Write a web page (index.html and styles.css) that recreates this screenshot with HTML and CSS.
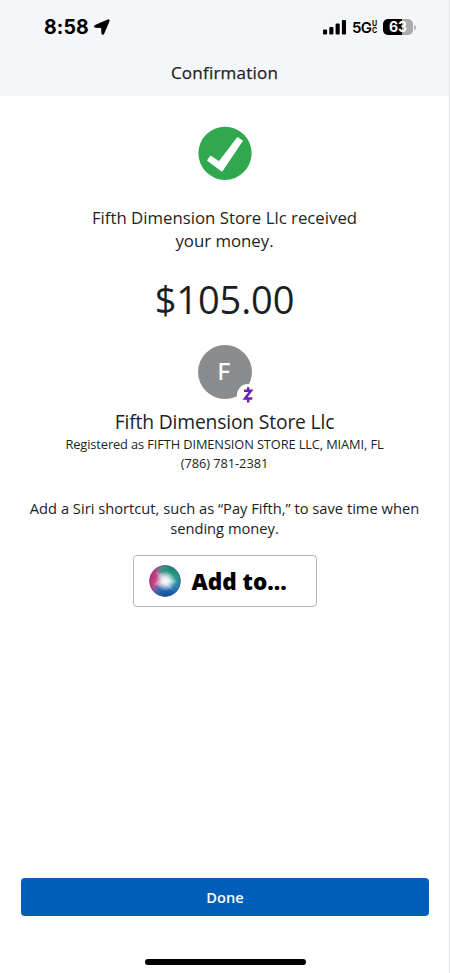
FILE: index.html
```html
<!DOCTYPE html>
<html lang="en">
<head>
<meta charset="utf-8">
<title>Confirmation</title>
<link rel="stylesheet" href="styles.css">
</head>
<body>
<div class="screen">
  <header class="header">
    <div class="status">
      <div class="status-left">
        <span class="time">8:58</span>
        <svg class="location" viewBox="0 0 16 16"><path d="M1.300 6.600 14 1.200c.7-.3 1.100.1.800.8L9.500 14.500c-.3.700-1.300.5-1.300-.2L7.800 8.300 1.500 7.900C.7 7.900.6 6.900 1.300 6.600z" stroke="#000" stroke-width="1.500" stroke-linejoin="round"/></svg>
      </div>
      <div class="status-right">
        <svg class="signal" viewBox="0 0 24 15"><rect x="0" y="9.500" width="4.100" height="5" rx="1"/><rect x="6.300" y="7" width="4.100" height="7.500" rx="1"/><rect x="12.600" y="3.500" width="4.100" height="11" rx="1"/><rect x="18.900" y="0" width="4.100" height="14.500" rx="1"/></svg>
        <span class="network">5G</span>
        <span class="uc"><span>U</span><span>C</span></span>
        <span class="battery">63</span>
        <span class="battery-tip"></span>
      </div>
    </div>
    <h1 class="title">Confirmation</h1>
  </header>
  <main class="content">
    <svg class="check" viewBox="0 0 54 54"><circle cx="27" cy="27.300" r="26.600" fill="#2fa84f"/><path d="M9.500 34.500 12.500 30 21 35.700 39.500 11.500 44.500 14.800 24 45.300z" fill="#fff" stroke="#fff" stroke-width="1" stroke-linejoin="round"/></svg>
    <p class="message">Fifth Dimension Store Llc received<br>your money.</p>
    <p class="amount">$105.00</p>
    <div class="avatar">
      <span>F</span>
      <svg class="zelle" viewBox="0 0 22 22"><circle cx="11" cy="11" r="11" fill="#fff"/><path d="M7 6.800h7L8 14.600h7.300M11.200 3.300v3M11.200 15v3.500" fill="none" stroke="#6720b8" stroke-width="2.500"/></svg>
    </div>
    <h2 class="name">Fifth Dimension Store Llc</h2>
    <p class="registered">Registered as FIFTH DIMENSION STORE LLC, MIAMI, FL</p>
    <p class="phone">(786) 781-2381</p>
    <p class="hint">Add a Siri shortcut, such as “Pay Fifth,” to save time when<br>sending money.</p>
    <button class="siri">
      <svg class="orb" viewBox="0 0 32 32">
        <defs>
          <linearGradient id="base" x1="0" y1=".4" x2="1" y2=".6"><stop stop-color="#c5286f"/><stop offset=".35" stop-color="#c05a9c"/><stop offset=".65" stop-color="#459eb0"/><stop offset="1" stop-color="#237c9a"/></linearGradient>
          <radialGradient id="green" cx=".72" cy=".08" r=".55"><stop stop-color="#188570"/><stop offset=".6" stop-color="#269b82" stop-opacity=".8"/><stop offset="1" stop-color="#35aa9b" stop-opacity="0"/></radialGradient>
          <radialGradient id="blue" cx=".55" cy="1" r=".55"><stop stop-color="#124b98"/><stop offset=".6" stop-color="#1967b2" stop-opacity=".85"/><stop offset="1" stop-color="#3887c4" stop-opacity="0"/></radialGradient>
          <radialGradient id="glow" cx=".52" cy=".5" r=".33"><stop stop-color="#fff"/><stop offset=".35" stop-color="#fff" stop-opacity=".8"/><stop offset="1" stop-color="#fff" stop-opacity="0"/></radialGradient>
        </defs>
        <circle cx="16" cy="16" r="15.700" fill="url(#base)"/><circle cx="16" cy="16" r="15.700" fill="url(#green)"/><circle cx="16" cy="16" r="15.700" fill="url(#blue)"/>
        <path d="M7 7c6 0 9 3 11 8 4-2 8-1 10 2-4 2-7 2-10 0 2 3 5 6 7 9-5-2-8-5-9-9-3 4-8 5-12 2 3-3 7-4 11-3-4-1-7-4-8-9z" fill="#fff" opacity=".2"/>
        <circle cx="16" cy="16" r="15.700" fill="url(#glow)"/><circle cx="16" cy="16" r="15.200" fill="none" stroke="#4b527a" stroke-opacity=".45"/>
      </svg>
      <span>Add to...</span>
    </button>
  </main>
  <footer class="footer">
    <button class="done">Done</button>
    <div class="home"></div>
  </footer>
</div>
</body>
</html>
```
FILE: styles.css
```css
* { box-sizing: border-box; }
body { margin: 0; background: #fff; color: #1b1f24; font-family: "Open Sans", "Noto Sans", sans-serif; }
h1, h2, p { margin: 0; font-weight: 400; white-space: nowrap; }
button { font-family: inherit; padding: 0; }
.screen { width: 450px; height: 973px; display: flex; flex-direction: column; border-right: 1px solid #e3e4e6; }
.header { height: 96px; background: #f4f6f9; flex: none; }
.status { height: 54px; padding: 0 33px 0 44px; display: flex; justify-content: space-between; align-items: center; font-family: Inter, sans-serif; color: #000; }
.status-left, .status-right { display: flex; align-items: center; }
.time { font-size: 19.5px; font-weight: 700; line-height: 24px; letter-spacing: .1px; }
.location { width: 16px; height: 16px; margin-left: 5px; }
.signal { width: 24px; height: 15px; margin-right: 5px; }
.network { font-size: 15px; font-weight: 600; letter-spacing: -.7px; width: 20px; }
.uc { display: flex; flex-direction: column; font-size: 7px; font-weight: 700; line-height: 7px; width: 6px; margin-right: 5px; }
.battery { width: 30px; height: 16px; border-radius: 5px; background: linear-gradient(90deg, #000 64%, #ababad 64%); color: #fff; font-size: 14px; font-weight: 700; line-height: 16px; text-align: center; }
.battery-tip { width: 2px; height: 5px; margin-left: 1px; border-radius: 0 2px 2px 0; background: #b4b4b6; }
.title { font-size: 17px; letter-spacing: .22px; -webkit-text-stroke: .25px #1b1f24; line-height: 24px; text-align: center; margin-top: 7px; }
.content { flex: 1; display: flex; flex-direction: column; align-items: center; padding-top: 30px; text-align: center; }
.check { width: 54px; height: 54px; }
.message { font-size: 16.8px; line-height: 23px; margin-top: 26px; }
.amount { font-size: 38px; line-height: 52px; margin-top: 21px; letter-spacing: -.1px; }
.avatar { position: relative; width: 54px; height: 54px; margin-top: 20px; border-radius: 50%; background: #8b8c8e; color: #fff; font-family: Inter, sans-serif; font-size: 22.5px; font-weight: 500; line-height: 54px; }
.zelle { position: absolute; left: 39px; top: 39px; width: 22px; height: 22px; }
.name { font-size: 19.3px; letter-spacing: -.17px; line-height: 28px; margin-top: 9px; }
.registered { font-size: 12.8px; letter-spacing: -.1px; line-height: 18px; margin-top: -1px; }
.phone { font-size: 12.8px; letter-spacing: -.06px; line-height: 18px; margin-top: 1px; }
.hint { font-size: 14.7px; line-height: 20px; margin-top: 26px; }
.siri { width: 184px; height: 52px; margin-top: 17px; padding-left: 15px; display: flex; align-items: center; border: 1px solid #b5b6b8; border-radius: 4px; background: #fff; color: #000; font-size: 22.5px; font-weight: 800; letter-spacing: 0; }
.orb { width: 32px; height: 32px; margin-right: 11px; }
.footer { height: 95px; padding: 0 20px 0 21px; display: flex; flex-direction: column; align-items: center; }
.done { width: 100%; height: 38px; border: 0; border-radius: 4px; background: #005eb8; color: #fff; font-size: 14.6px; font-weight: 600; }
.home { width: 161px; height: 6px; margin-top: 43px; border-radius: 3px; background: #000; }
```
